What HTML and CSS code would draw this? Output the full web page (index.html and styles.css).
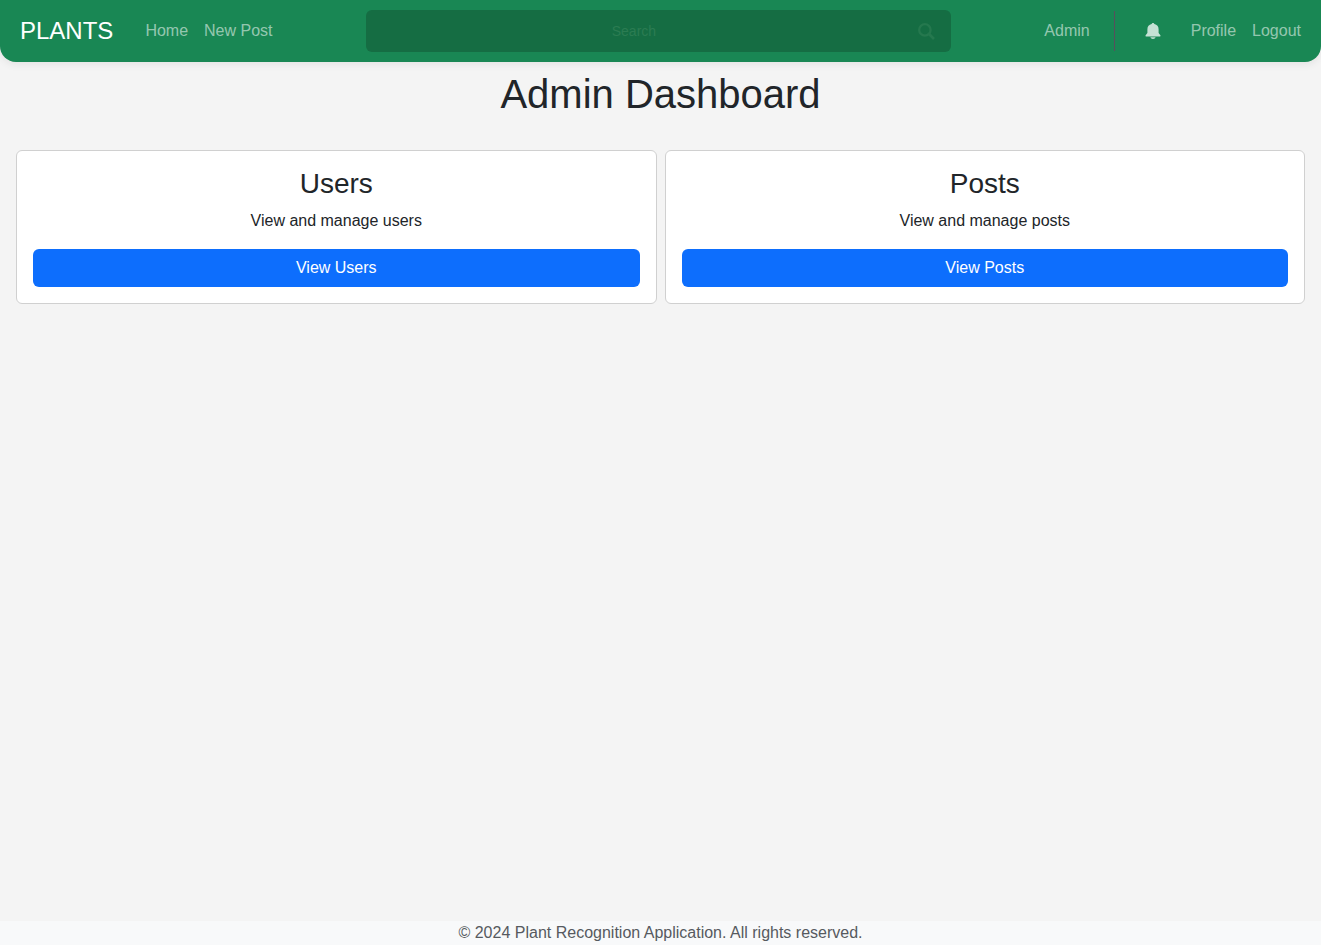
FILE: index.html
```html
<!DOCTYPE html>
<html lang="en">
<head>
<meta charset="utf-8">
<meta name="viewport" content="width=device-width, initial-scale=1">
<title>Admin Dashboard</title>
<link rel="stylesheet" href="styles.css">
</head>
<body>
<nav class="navbar">
  <div class="nav-start">
    <a class="brand" href="#">PLANTS</a>
    <a class="nav-link" href="#">Home</a>
    <a class="nav-link" href="#">New Post</a>
  </div>
  <form class="search">
    <input class="search-input" type="text" placeholder="Search" aria-label="Search">
    <button class="search-button" type="button" aria-label="Submit search">
      <svg width="17" height="17" viewBox="0 0 17 17" fill="none" stroke="currentColor" stroke-width="2.3" aria-hidden="true"><circle cx="6.900" cy="6.900" r="5.700"/><path d="M10.800 10.800L16 16" stroke-width="2.700"/></svg>
    </button>
  </form>
  <div class="nav-end">
    <a class="nav-link" href="#">Admin</a>
    <span class="divider"></span>
    <a class="bell" href="#" aria-label="Notifications">
      <svg width="16" height="16" viewBox="0 0 16 16" fill="currentColor" aria-hidden="true"><path d="M8 0C7.300 0 6.800.5 6.600 1.100 4 1.600 2.400 3.500 2.400 6.200V10L.8 11.900C.2 12.600.5 13.500 1.400 13.500H14.600C15.500 13.500 15.800 12.600 15.200 11.900L13.600 10V6.200C13.600 3.500 12 1.600 9.400 1.100 9.200.5 8.700 0 8 0ZM5.400 14.300C5.800 15.300 6.800 16 8 16S10.200 15.300 10.600 14.300Z"/></svg>
    </a>
    <a class="nav-link" href="#">Profile</a>
    <a class="nav-link" href="#">Logout</a>
  </div>
</nav>
<main class="content">
  <h1 class="title">Admin Dashboard</h1>
  <div class="cards">
    <section class="card">
      <h2 class="card-title">Users</h2>
      <p class="card-text">View and manage users</p>
      <a class="button" href="#">View Users</a>
    </section>
    <section class="card">
      <h2 class="card-title">Posts</h2>
      <p class="card-text">View and manage posts</p>
      <a class="button" href="#">View Posts</a>
    </section>
  </div>
</main>
<footer class="footer">© 2024 Plant Recognition Application. All rights reserved.</footer>
</body>
</html>
```
FILE: styles.css
```css
* {
  box-sizing: border-box;
}

body {
  display: flex;
  flex-direction: column;
  min-height: 100vh;
  margin: 0;
  background: #f4f4f4;
  color: #212529;
  font: 16px/24px "Liberation Sans", Arial, sans-serif;
}

a {
  text-decoration: none;
}

.navbar {
  display: flex;
  align-items: center;
  justify-content: space-between;
  padding: 10px 20px;
  background: #198754;
  border-radius: 0 0 16px 16px;
  box-shadow: 0 2px 8px rgba(0, 0, 0, 0.08);
}

.nav-start,
.nav-end {
  display: flex;
  align-items: center;
  gap: 16px;
}

.brand {
  margin-right: 16px;
  color: #fff;
  font-size: 24px;
}

.nav-link {
  color: rgba(255, 255, 255, 0.55);
}

.search {
  display: flex;
  flex: 0 1 585px;
  background: #156d43;
  border-radius: 6px;
}

.search-input {
  flex: 1;
  min-width: 0;
  height: 42px;
  padding: 0 12px;
  border: 0;
  outline: 0;
  background: transparent;
  color: #fff;
  font: inherit;
  font-size: 14px;
  text-align: center;
}

.search-input::placeholder {
  color: #2b7c52;
  opacity: 1;
}

.search-button {
  display: flex;
  align-items: center;
  padding: 0 16px;
  border: 0;
  background: transparent;
  color: #25784e;
}

.divider {
  width: 1px;
  height: 40px;
  margin: 0 14px 0 8px;
  background: #574f5c;
}

.bell {
  display: flex;
  margin-right: 14px;
  color: #c5e1d4;
}

.content {
  flex: 1;
  padding: 8px 16px;
}

.title {
  margin: 0 0 32px;
  font-size: 40px;
  font-weight: 400;
  line-height: 48px;
  text-align: center;
}

.cards {
  display: grid;
  grid-template-columns: 1fr 1fr;
  gap: 8px;
}

.card {
  padding: 16px;
  border: 1px solid #d0d0d0;
  border-radius: 6px;
  background: #fff;
  text-align: center;
}

.card-title {
  margin: 0 0 8px;
  font-size: 28px;
  font-weight: 400;
  line-height: 34px;
}

.card-text {
  margin: 0 0 16px;
}

.button {
  display: block;
  padding: 7px 12px;
  border-radius: 6px;
  background: #0d6efd;
  color: #fff;
}

.footer {
  background: #f8f9fa;
  color: #565a5f;
  text-align: center;
}
```
